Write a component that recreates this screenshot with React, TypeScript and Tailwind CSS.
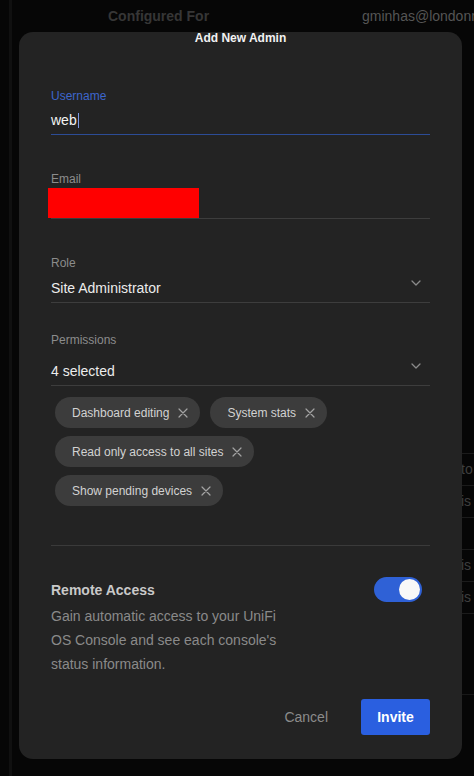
import React from "react";

const Chevron = () => (
  <svg width="10" height="6" viewBox="0 0 10 6" fill="none" className="mr-[9px] mt-[2px] self-start">
    <path d="M1 1L5 5L9 1" stroke="#8a8a8a" strokeWidth="1.3" strokeLinecap="round" strokeLinejoin="round" />
  </svg>
);

const CloseIcon = () => (
  <svg width="10" height="10" viewBox="0 0 10 10" fill="none">
    <path d="M1 1L9 9M9 1L1 9" stroke="#a3a3a3" strokeWidth="1.2" strokeLinecap="round" />
  </svg>
);

const Chip = ({ label }: { label: string }) => (
  <div className="flex h-[31px] items-center gap-[9px] rounded-full bg-[#3c3c3c] pl-[17px] pr-[12px] text-[12px] text-[#d2d2d2]">
    <span className="whitespace-nowrap">{label}</span>
    <CloseIcon />
  </div>
);

const permissions = ["Dashboard editing", "System stats", "Read only access to all sites", "Show pending devices"];

// rows of the admin table that sit behind the dialog
const bgRows = ["to", "is", "", "is", "is"];

export default function App() {
  return (
    <div className="relative h-[776px] w-[474px] overflow-hidden bg-[#060606] font-['Liberation_Sans',Arial,sans-serif]">
      {/* Background page */}
      <div className="ml-[9px] flex h-full flex-col border-l-[3px] border-[#101010]">
        <div className="flex pt-[6px] text-[14px] leading-[20px]">
          <span className="ml-[96px] w-[254px] shrink-0 font-bold text-[#363636]">Configured For</span>
          <span className="shrink-0 whitespace-nowrap text-[#555555]">gminhas@londonmet.ac.uk</span>
        </div>
        <div className="ml-[380px] mt-[427px] flex flex-col">
          {bgRows.map((t, i) => (
            <div key={i} className="flex h-[32px] items-center border-t border-[#1b1b1b] pl-[69px] text-[14px] text-[#3e3e3e]">
              {t}
            </div>
          ))}
          <div className="h-[32px] border-t border-[#1b1b1b]" />
          <div className="mt-[49px] border-t border-[#181818]" />
        </div>
      </div>

      {/* Dialog */}
      <div className="absolute left-[19px] top-[32px] w-[443px] rounded-[14px] bg-[#232323] px-[32px] pb-[24px]">
        <div className="text-center text-[12px] font-bold leading-[12px] text-[#f2f2f2]">Add New Admin</div>

        <div className="mt-[44px] text-[12px] leading-[16px] text-[#3d66cc]">Username</div>
        <div className="mt-[6px] flex items-center border-b border-[#2c4c96] pb-[4px] text-[14px] leading-[20px] text-[#f4f4f4]">
          web
          <span className="ml-[1px] h-[15px] w-px bg-[#7a98e6]" />
        </div>

        <div className="mt-[36px] text-[12px] leading-[16px] text-[#8c8c8c]">Email</div>
        <div className="mt-[1px] border-b border-[#3d3d3d]">
          <div className="-ml-[3px] h-[30px] w-[151px] bg-[#ff0000]" />
        </div>

        <div className="mt-[36px] text-[12px] leading-[16px] text-[#8c8c8c]">Role</div>
        <div className="mt-[7px] flex items-center justify-between border-b border-[#3d3d3d] pb-[4px] text-[14px] leading-[20px] text-[#ececec]">
          <span>Site Administrator</span>
          <Chevron />
        </div>

        <div className="mt-[29px] text-[12px] leading-[16px] text-[#8c8c8c]">Permissions</div>
        <div className="mt-[13px] flex items-center justify-between border-b border-[#3d3d3d] pb-[4px] text-[14px] leading-[20px] text-[#ececec]">
          <span>4 selected</span>
          <Chevron />
        </div>

        <div className="ml-[4px] mt-[11px] flex w-[360px] flex-wrap gap-x-[10px] gap-y-[8px]">
          {permissions.map((p) => (
            <Chip key={p} label={p} />
          ))}
        </div>

        <div className="mt-[39px] h-px bg-[#3a3a3a]" />

        <div className="mt-[31px] flex items-start justify-between">
          <div className="pt-[3px]">
            <div className="text-[14px] font-bold leading-[20px] text-[#c9c9c9]">Remote Access</div>
            <p className="mt-[4px] w-[232px] text-[14px] leading-[24px] text-[#8a8a8a]">
              Gain automatic access to your UniFi OS Console and see each console's status information.
            </p>
          </div>
          <div className="mr-[8px] flex h-[25px] w-[48px] items-center justify-end rounded-full bg-[#2f61d6] pr-[2px]">
            <div className="h-[21px] w-[21px] rounded-full bg-[#f8f8f8]" />
          </div>
        </div>

        <div className="mt-[23px] flex items-center justify-end gap-[33px]">
          <button className="text-[14px] leading-[20px] text-[#8b8b8b]">Cancel</button>
          <button className="h-[36px] w-[69px] rounded-[3px] bg-[#2a5fe0] text-[14px] font-bold text-white">Invite</button>
        </div>
      </div>
    </div>
  );
}
